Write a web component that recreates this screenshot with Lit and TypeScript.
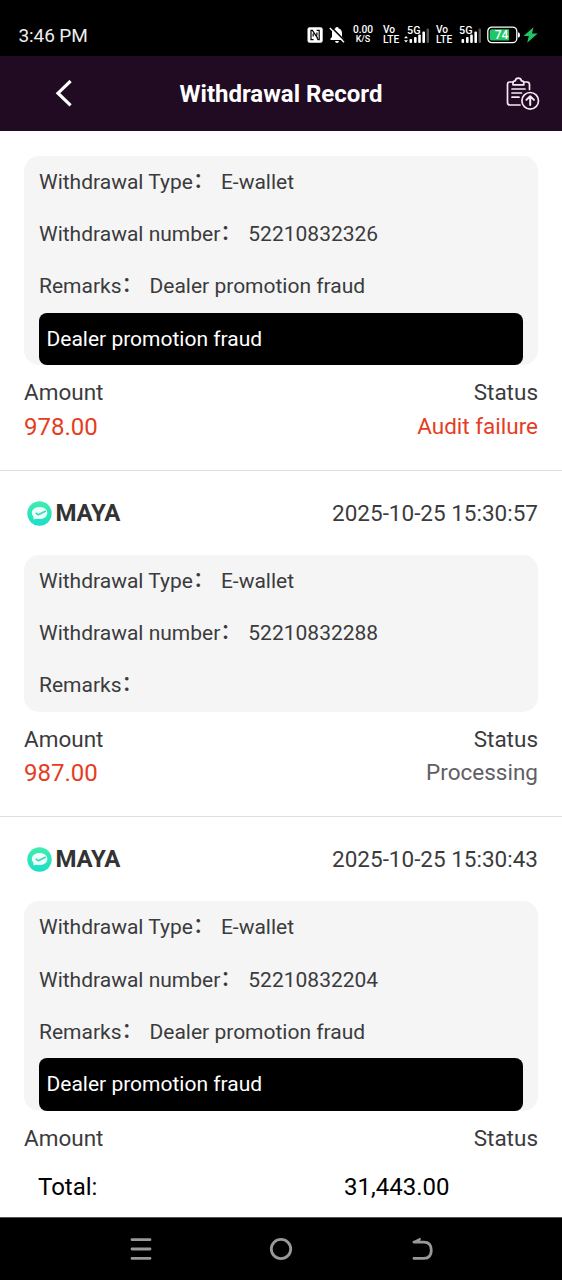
import { LitElement, html, css, svg, nothing } from "lit";
import { customElement } from "lit/decorators.js";

interface WithdrawalRecord {
  time?: string;
  number: string;
  remark: string;
  amount: string;
  status: string;
  failed: boolean;
}

const records: WithdrawalRecord[] = [
  { number: "52210832326", remark: "Dealer promotion fraud", amount: "978.00", status: "Audit failure", failed: true },
  { time: "2025-10-25 15:30:57", number: "52210832288", remark: "", amount: "987.00", status: "Processing", failed: false },
  { time: "2025-10-25 15:30:43", number: "52210832204", remark: "Dealer promotion fraud", amount: "", status: "", failed: true },
];

const signal = svg`
  <rect x="5.5" y="14" width="2.6" height="4" rx="1" fill="#fff"/>
  <rect x="10" y="12" width="2.6" height="6" rx="1" fill="#fff"/>
  <rect x="14.2" y="9.5" width="2.6" height="8.5" rx="1" fill="#fff"/>
  <rect x="18.4" y="6.5" width="2.6" height="11.5" rx="1" fill="#fff"/>
  <rect x="22.6" y="3.5" width="2.4" height="14.5" rx="1" fill="#555"/>`;

@customElement("app-root")
export class AppRoot extends LitElement {
  static styles = css`
    :host {
      display: flex;
      flex-direction: column;
      height: 1280px;
      width: 100%;
      overflow: hidden;
      background: #fff;
      color: #3b3b3d;
      font-family: Roboto, "Noto Sans CJK SC", sans-serif;
    }
    * { box-sizing: border-box; }
    svg { display: block; flex: none; }
    .statusbar {
      flex: none;
      height: 56px;
      background: #000;
      color: #eee;
      display: flex;
      align-items: center;
      padding: 0 24px 0 18.5px;
    }
    .clock { font-size: 19px; letter-spacing: -0.1px; line-height: 30px; margin-top: 16px; flex: 1; }
    .indicators { display: flex; align-items: center; margin-top: 14px; height: 22px; }
    .stack {
      display: flex;
      flex-direction: column;
      align-items: center;
      font-size: 10.2px;
      line-height: 9.6px;
      font-weight: 500;
      color: #fff;
    }
    .stack.left { align-items: flex-start; }
    .rate { width: 22px; margin-left: 7px; }
    .small { font-size: 9px; }
    .volte { width: 16px; margin-left: 9px; }
    .sig { margin-left: 5px; }
    .bell { margin-left: 6px; }
    .volte2 { margin-left: 6px; }
    .sig2 { margin-left: 4px; }
    .battery { margin-left: 5px; }
    .bolt { margin-left: 2px; }
    .gtext { font: 500 10.8px Roboto, sans-serif; fill: #fff; }
    .btext { font: 500 12px Roboto, sans-serif; fill: #fff; }
    .titlebar {
      flex: none;
      height: 75px;
      background: #210b23;
      color: #fff;
      display: grid;
      grid-template-columns: 120px 1fr 120px;
      align-items: center;
    }
    .back { padding-left: 54px; }
    .title { text-align: center; font-size: 24px; font-weight: 700; line-height: 32px; white-space: nowrap; }
    .export { display: flex; justify-content: flex-end; padding-right: 22px; }
    .list { flex: 1; min-height: 0; overflow: hidden; padding-top: 24.6px; }
    .head {
      height: 84.1px;
      display: flex;
      align-items: center;
      justify-content: space-between;
      padding: 0 24px 0 27px;
    }
    .brand { display: flex; align-items: center; gap: 3.5px; font-size: 24px; letter-spacing: -0.1px; font-weight: 700; color: #333; }
    .time { font-size: 22.5px; }
    .card { margin: 0 24px; padding: 0 15px; background: #f5f5f5; border-radius: 15px; font-size: 21px; }
    .row { height: 52.4px; line-height: 52px; display: flex; white-space: nowrap; }
    .colon { font-weight: 500; line-height: 48px; }
    .value { margin-left: 7px; }
    .notice { height: 52.5px; line-height: 52px; background: #000; color: #fff; border-radius: 8px; padding-left: 7.5px; }
    .foot { height: 105.3px; padding: 11px 24px 0; border-bottom: 1px solid #dedede; font-size: 22.5px; }
    .pair { display: flex; justify-content: space-between; height: 33.5px; line-height: 33.5px; }
    .amount { font-size: 24px; line-height: 34.5px; color: #e63c22; }
    .failed { color: #e63c22; }
    .pending { color: #606064; }
    .total {
      flex: none;
      height: 61px;
      display: grid;
      grid-template-columns: 1fr 218px;
      align-items: center;
      padding-left: 38px;
      background: #fff;
      color: #000;
      font-size: 24px;
    }
    .navbar {
      flex: none;
      height: 63px;
      background: #000;
      border-top: 1px solid #555;
      display: flex;
      align-items: center;
      justify-content: center;
      gap: 116.5px;
    }
  `;

  private statusBar() {
    return html`
      <div class="statusbar">
        <div class="clock">3:46 PM</div>
        <div class="indicators">
          <svg width="16" height="16" viewBox="0 0 16 16">
            <rect x=".5" y=".3" width="15.2" height="15.4" rx="2.2" fill="#fff"/>
            <path d="M6.6 12.6H4V3.4H5.4L10.6 11.2M6.2 6.4V9.6M9.6 3.4H12.2V12.6H11L10 11M9.9 5.6V8.6" fill="none" stroke="#000" stroke-width="1.2"/>
          </svg>
          <svg class="bell" width="16" height="18" viewBox="0 0 16 18">
            <path d="M1.5 14V12.6L3 11V7Q3.2 3.4 6.4 2.5V1.8Q8 .1 9.6 1.8V2.5Q12.8 3.4 13 7V11L14.5 12.6V14ZM6 15H10Q9.6 17 8 17T6 15Z" fill="#fff"/>
            <path d="M1.8 .6L15.6 14.8" stroke="#000" stroke-width="1.6"/>
            <path d="M.8 1.9L15 16.2" stroke="#fff" stroke-width="1.4"/>
          </svg>
          <div class="stack rate"><span>0.00</span><span class="small">K/S</span></div>
          <div class="stack left volte"><span>Vo</span><span>LTE</span></div>
          <svg class="sig" width="26" height="20" viewBox="0 0 26 20">
            <text class="gtext" x="3" y="9">5G</text>
            <path d="M0 13.3L2 11L4 13.3ZM0 15.2H4L2 17.6Z" fill="#fff"/>
            ${signal}
          </svg>
          <div class="stack left volte volte2"><span>Vo</span><span>LTE</span></div>
          <svg class="sig2" width="26" height="20" viewBox="0 0 26 20">
            <text class="gtext" x="3" y="9">5G</text>
            ${signal}
          </svg>
          <svg class="battery" width="34" height="18" viewBox="0 0 34 18">
            <rect x=".8" y="1.1" width="29" height="15.6" rx="4.2" fill="none" stroke="#fff" stroke-width="1.3"/>
            <path d="M5 3.2H22V14.6H5Q2.7 14.6 2.7 12.2V5.6Q2.7 3.2 5 3.2Z" fill="#20c665"/>
            <path d="M31 6.3Q33 6.3 33 9T31 11.5Z" fill="#fff"/>
            <text class="btext" x="7.8" y="13.1">74</text>
          </svg>
          <svg class="bolt" width="15" height="16" viewBox="0 0 15 16">
            <path d="M10.5 .3L.5 9H5.8L4.2 15.7L14.7 6.5H9Z" fill="#20c665"/>
          </svg>
        </div>
      </div>`;
  }

  private row(label: string, value: string) {
    return html`<div class="row"><span>${label}</span><span class="colon">：</span><span class="value">${value}</span></div>`;
  }

  private record(r: WithdrawalRecord) {
    return html`
      ${r.time
        ? html`<div class="head">
            <div class="brand">
              <svg width="25" height="26" viewBox="0 0 25 26">
                <defs><linearGradient id="mint" x1="0" y1="0" x2="0" y2="1"><stop stop-color="#42ecad"/><stop offset="1" stop-color="#18dfc9"/></linearGradient></defs>
                <circle cx="12.5" cy="13.5" r="12.2" fill="url(#mint)"/>
                <path d="M12.6 7C8 7 4.8 9.6 4.8 13Q4.8 15.2 6.4 16.8L6.6 19.6L9.5 18.7Q11 19.1 12.7 19C17.3 19 20.3 16.4 20.3 13S17.2 7 12.6 7Z" fill="#effffb"/>
                <path d="M8.7 12.8L11.3 14.8L18.8 11" fill="none" stroke="#31d9bd" stroke-width="1.6"/>
              </svg>
              <span>MAYA</span>
            </div>
            <span class="time">${r.time}</span>
          </div>`
        : nothing}
      <div class="card">
        ${this.row("Withdrawal Type", "E-wallet")}
        ${this.row("Withdrawal number", r.number)}
        ${this.row("Remarks", r.remark)}
        ${r.remark ? html`<div class="notice">${r.remark}</div>` : nothing}
      </div>
      <div class="foot">
        <div class="pair"><span>Amount</span><span>Status</span></div>
        <div class="pair"><span class="amount">${r.amount}</span><span class=${r.failed ? "failed" : "pending"}>${r.status}</span></div>
      </div>`;
  }

  render() {
    return html`
      ${this.statusBar()}
      <div class="titlebar">
        <div class="back">
          <svg width="20" height="28" viewBox="0 0 20 28"><path d="M16.6 1L4 13.2L16.6 25.4" fill="none" stroke="#fff" stroke-width="3.2"/></svg>
        </div>
        <div class="title">Withdrawal Record</div>
        <div class="export">
          <svg width="34" height="34" viewBox="0 0 34 34" fill="none" stroke="#f6e9f5" stroke-width="1.7" stroke-linecap="round" stroke-linejoin="round">
            <path d="M7 5H3.5Q1.5 5 1.5 7.5V25.5Q1.5 28 4 28H14M18.5 5H21Q23.5 5 23.5 7.5V12.5"/>
            <path d="M7 7.8V5.7Q7 3.9 9.3 3.8Q9.8 1.2 12.3 1.2T15.4 3.8Q17.8 3.9 17.8 5.7V7.8Z"/>
            <path d="M6 12H19M6 16H15.5M6 20.2H13"/>
            <circle cx="24.2" cy="23.8" r="8.3"/>
            <path d="M24.2 28.1V19.4M20.4 22.9L24.2 19.2L28 22.9" stroke-width="2"/>
          </svg>
        </div>
      </div>
      <div class="list">${records.map((r) => this.record(r))}</div>
      <div class="total"><span>Total:</span><span>31,443.00</span></div>
      <div class="navbar">
        <svg width="24" height="24" viewBox="0 0 24 24"><path d="M3 2.7H21M3 12H21M3 21.4H21" stroke="#999" stroke-width="2.8" stroke-linecap="round"/></svg>
        <svg width="24" height="24" viewBox="0 0 24 24"><circle cx="12" cy="12" r="9.7" fill="none" stroke="#999" stroke-width="2.8"/></svg>
        <svg width="24" height="24" viewBox="0 0 24 24"><path d="M4 5.2H14Q21.3 5.2 21.3 13.2T14 21.4H4" fill="none" stroke="#999" stroke-width="2.8" stroke-linecap="round"/><path d="M2.4 4.8L10 .8L11 2L9 5.8H4Z" fill="#999"/></svg>
      </div>`;
  }
}
